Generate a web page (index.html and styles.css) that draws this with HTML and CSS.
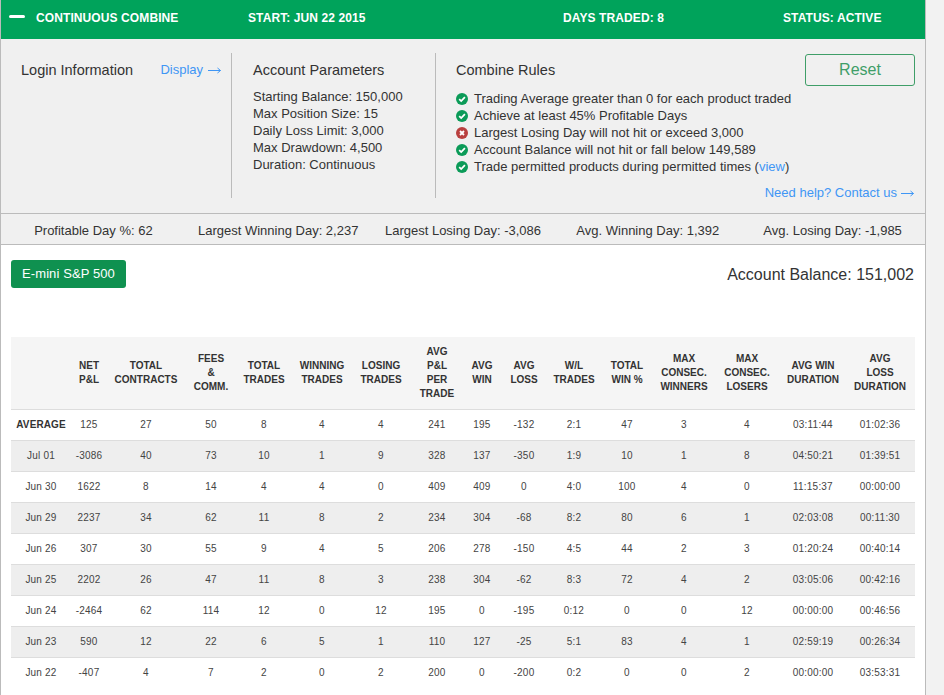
FILE: index.html
```html
<!DOCTYPE html>
<html>
<head>
    <title>Continuous Combine</title>
    <link rel="stylesheet" href="styles.css">
</head>
<body>
<div class="wrapper">
    <div class="top-bar">
        <span class="minus"></span>
        <span class="top-item top-name">CONTINUOUS COMBINE</span>
        <span class="top-item top-start">START: JUN 22 2015</span>
        <span class="top-item top-days">DAYS TRADED: 8</span>
        <span class="top-item">STATUS: ACTIVE</span>
    </div>

    <div class="info">
        <div class="info-col login-col">
            <h3 class="info-title">Login Information</h3>
            <a class="link display-link">Display<svg class="arrow" viewBox="0 0 13 7"><path d="M0 3.5H12.5M9.5 1 12.5 3.5 9.5 6"/></svg></a>
        </div>
        <div class="info-col params-col">
            <h3 class="info-title">Account Parameters</h3>
            <p class="info-line">Starting Balance: 150,000</p>
            <p class="info-line">Max Position Size: 15</p>
            <p class="info-line">Daily Loss Limit: 3,000</p>
            <p class="info-line">Max Drawdown: 4,500</p>
            <p class="info-line">Duration: Continuous</p>
        </div>
        <div class="rules-col">
            <a class="reset-button">Reset</a>
            <h3 class="info-title">Combine Rules</h3>
            <ul class="rules">
                <li class="rule"><svg class="rule-icon" viewBox="0 0 12 12"><circle class="ok" cx="6" cy="6" r="6"/><path class="mark" d="M3.2 6.2 5.2 8.1 8.9 4.2"/></svg>Trading Average greater than 0 for each product traded</li>
                <li class="rule"><svg class="rule-icon" viewBox="0 0 12 12"><circle class="ok" cx="6" cy="6" r="6"/><path class="mark" d="M3.2 6.2 5.2 8.1 8.9 4.2"/></svg>Achieve at least 45% Profitable Days</li>
                <li class="rule"><svg class="rule-icon" viewBox="0 0 12 12"><circle class="bad" cx="6" cy="6" r="6"/><path class="mark" d="M4 4 8 8M8 4 4 8"/></svg>Largest Losing Day will not hit or exceed 3,000</li>
                <li class="rule"><svg class="rule-icon" viewBox="0 0 12 12"><circle class="ok" cx="6" cy="6" r="6"/><path class="mark" d="M3.2 6.2 5.2 8.1 8.9 4.2"/></svg>Account Balance will not hit or fall below 149,589</li>
                <li class="rule"><svg class="rule-icon" viewBox="0 0 12 12"><circle class="ok" cx="6" cy="6" r="6"/><path class="mark" d="M3.2 6.2 5.2 8.1 8.9 4.2"/></svg>Trade permitted products during permitted times&nbsp;(<a class="link">view</a>)</li>
            </ul>
            <a class="link help-link">Need help? Contact us<svg class="arrow" viewBox="0 0 13 7"><path d="M0 3.5H12.5M9.5 1 12.5 3.5 9.5 6"/></svg></a>
        </div>
    </div>

    <div class="stats">
        <span>Profitable Day %: 62</span>
        <span>Largest Winning Day: 2,237</span>
        <span>Largest Losing Day: -3,086</span>
        <span>Avg. Winning Day: 1,392</span>
        <span>Avg. Losing Day: -1,985</span>
    </div>

    <div class="product-row">
        <a class="product-button">E-mini S&amp;P 500</a>
        <span class="balance">Account Balance: 151,002</span>
    </div>

    <table class="results">
        <thead>
            <tr>
                <th></th>
                <th>NET<br>P&amp;L</th>
                <th>TOTAL<br>CONTRACTS</th>
                <th>FEES<br>&amp;<br>COMM.</th>
                <th>TOTAL<br>TRADES</th>
                <th>WINNING<br>TRADES</th>
                <th>LOSING<br>TRADES</th>
                <th>AVG<br>P&amp;L<br>PER<br>TRADE</th>
                <th>AVG<br>WIN</th>
                <th>AVG<br>LOSS</th>
                <th>W/L<br>TRADES</th>
                <th>TOTAL<br>WIN %</th>
                <th>MAX<br>CONSEC.<br>WINNERS</th>
                <th>MAX<br>CONSEC.<br>LOSERS</th>
                <th>AVG WIN<br>DURATION</th>
                <th>AVG<br>LOSS<br>DURATION</th>
            </tr>
        </thead>
        <tbody>
            <tr><td class="avg-label">AVERAGE</td><td>125</td><td>27</td><td>50</td><td>8</td><td>4</td><td>4</td><td>241</td><td>195</td><td>-132</td><td>2:1</td><td>47</td><td>3</td><td>4</td><td>03:11:44</td><td>01:02:36</td></tr>
            <tr><td>Jul 01</td><td>-3086</td><td>40</td><td>73</td><td>10</td><td>1</td><td>9</td><td>328</td><td>137</td><td>-350</td><td>1:9</td><td>10</td><td>1</td><td>8</td><td>04:50:21</td><td>01:39:51</td></tr>
            <tr><td>Jun 30</td><td>1622</td><td>8</td><td>14</td><td>4</td><td>4</td><td>0</td><td>409</td><td>409</td><td>0</td><td>4:0</td><td>100</td><td>4</td><td>0</td><td>11:15:37</td><td>00:00:00</td></tr>
            <tr><td>Jun 29</td><td>2237</td><td>34</td><td>62</td><td>11</td><td>8</td><td>2</td><td>234</td><td>304</td><td>-68</td><td>8:2</td><td>80</td><td>6</td><td>1</td><td>02:03:08</td><td>00:11:30</td></tr>
            <tr><td>Jun 26</td><td>307</td><td>30</td><td>55</td><td>9</td><td>4</td><td>5</td><td>206</td><td>278</td><td>-150</td><td>4:5</td><td>44</td><td>2</td><td>3</td><td>01:20:24</td><td>00:40:14</td></tr>
            <tr><td>Jun 25</td><td>2202</td><td>26</td><td>47</td><td>11</td><td>8</td><td>3</td><td>238</td><td>304</td><td>-62</td><td>8:3</td><td>72</td><td>4</td><td>2</td><td>03:05:06</td><td>00:42:16</td></tr>
            <tr><td>Jun 24</td><td>-2464</td><td>62</td><td>114</td><td>12</td><td>0</td><td>12</td><td>195</td><td>0</td><td>-195</td><td>0:12</td><td>0</td><td>0</td><td>12</td><td>00:00:00</td><td>00:46:56</td></tr>
            <tr><td>Jun 23</td><td>590</td><td>12</td><td>22</td><td>6</td><td>5</td><td>1</td><td>110</td><td>127</td><td>-25</td><td>5:1</td><td>83</td><td>4</td><td>1</td><td>02:59:19</td><td>00:26:34</td></tr>
            <tr><td>Jun 22</td><td>-407</td><td>4</td><td>7</td><td>2</td><td>0</td><td>2</td><td>200</td><td>0</td><td>-200</td><td>0:2</td><td>0</td><td>0</td><td>2</td><td>00:00:00</td><td>03:53:31</td></tr>
        </tbody>
    </table>
</div>
</body>
</html>
```
FILE: styles.css
```css
html {
    background-color: #f2f2f2;
}

body {
    margin: 0;
    font-family: "Liberation Sans", Arial, sans-serif;
    color: #333;
}

.wrapper {
    width: 924px;
    height: 695px;
    overflow: hidden;
    background-color: #fff;
    border-left: 1px solid #bbb;
    border-right: 1px solid #bbb;
}

.top-bar {
    display: flex;
    align-items: center;
    height: 39px;
    box-sizing: border-box;
    padding-bottom: 4px;
    background-color: #00a35b;
    color: #fff;
    font-size: 12px;
    font-weight: bold;
    letter-spacing: 0.1px;
}

.minus {
    width: 16px;
    height: 3px;
    margin-left: 8px;
    margin-right: 11px;
    margin-top: -3px;
    border-radius: 2px;
    background-color: #fff;
}

.top-name {
    width: 212px;
}

.top-start {
    width: 315px;
}

.top-days {
    width: 220px;
}

.info {
    display: flex;
    height: 175px;
    box-sizing: border-box;
    padding-top: 14px;
    background-color: #f0f0f0;
    border-bottom: 1px solid #bbb;
}

.info-col {
    height: 145px;
    border-right: 1px solid #bbb;
}

.login-col {
    display: flex;
    justify-content: space-between;
    align-items: flex-start;
    box-sizing: border-box;
    width: 231px;
    padding: 0 10px 0 20px;
}

.params-col {
    width: 182px;
    padding-left: 21px;
}

.rules-col {
    flex: 1;
    padding-left: 20px;
    padding-right: 10px;
}

.info-title {
    margin: 0;
    padding-top: 8px;
    font-size: 14.5px;
    font-weight: normal;
    line-height: 18px;
}

.info-line {
    margin: 0;
    font-size: 13px;
    line-height: 17px;
}

.params-col .info-title {
    margin-bottom: 9px;
}

.link {
    color: #3f96f5;
}

.arrow {
    width: 13px;
    height: 7px;
    margin-left: 5px;
    fill: none;
    stroke: #3f96f5;
    stroke-width: 1;
}

.display-link {
    padding-top: 8px;
    font-size: 13px;
    line-height: 18px;
}

.reset-button {
    float: right;
    width: 108px;
    height: 30px;
    line-height: 29px;
    margin-top: 1px;
    text-align: center;
    font-size: 16px;
    color: #3f9e68;
    border: 1px solid #3f9e68;
    border-radius: 3px;
}

.rules {
    list-style: none;
    margin: 11px 0 0;
    padding: 0;
}

.rule {
    display: flex;
    align-items: center;
    font-size: 13px;
    line-height: 17px;
}

.rule-icon {
    width: 12px;
    height: 12px;
    margin-right: 6px;
}

.ok {
    fill: #0b9b58;
}

.bad {
    fill: #b9403f;
}

.mark {
    fill: none;
    stroke: #fff;
    stroke-width: 1.8;
}

.help-link {
    display: block;
    margin-top: 9px;
    margin-right: 1px;
    text-align: right;
    font-size: 13px;
    line-height: 17px;
}

.help-link .arrow {
    margin-left: 4px;
}

.stats {
    display: grid;
    grid-template-columns: repeat(5, 1fr);
    height: 31px;
    padding-top: 2px;
    align-items: center;
    text-align: center;
    background-color: #f0f0f0;
    border-bottom: 1px solid #bbb;
    box-sizing: border-box;
    font-size: 13px;
}

.product-row {
    display: flex;
    justify-content: space-between;
    align-items: flex-start;
    height: 92px;
    padding: 15px 11px 0 10px;
    box-sizing: border-box;
}

.product-button {
    padding: 0 11px;
    height: 28px;
    line-height: 27px;
    font-size: 13px;
    letter-spacing: 0.1px;
    color: #fff;
    background-color: #0f9150;
    border-radius: 3px;
}

.balance {
    margin-top: 6px;
    font-size: 16px;
}

.results {
    width: 904px;
    margin-left: 10px;
    table-layout: fixed;
    border-collapse: collapse;
    font-size: 10px;
    letter-spacing: 0.2px;
    text-align: center;
}

.results th {
    height: 72px;
    padding: 0;
    font-size: 10px;
    line-height: 14px;
    letter-spacing: 0;
    background-color: #f5f5f5;
    border-bottom: 1px solid #ddd;
}

.results td {
    height: 29px;
    padding: 0 0 1px;
    color: #444;
    border-bottom: 1px solid #ddd;
}

.results tbody tr:nth-child(even) {
    background-color: #eee;
}

.results tbody tr:last-child td {
    border-bottom: none;
}

.results .avg-label {
    font-weight: bold;
    letter-spacing: 0.1px;
    color: #333;
}

.results th:nth-child(1) { width: 60px; }
.results th:nth-child(2) { width: 36px; }
.results th:nth-child(3) { width: 78px; }
.results th:nth-child(4) { width: 52px; }
.results th:nth-child(5) { width: 54px; }
.results th:nth-child(6) { width: 62px; }
.results th:nth-child(7) { width: 56px; }
.results th:nth-child(8) { width: 56px; }
.results th:nth-child(9) { width: 34px; }
.results th:nth-child(10) { width: 50px; }
.results th:nth-child(11) { width: 50px; }
.results th:nth-child(12) { width: 56px; }
.results th:nth-child(13) { width: 58px; }
.results th:nth-child(14) { width: 68px; }
.results th:nth-child(15) { width: 64px; }
.results th:nth-child(16) { width: 70px; }
```
